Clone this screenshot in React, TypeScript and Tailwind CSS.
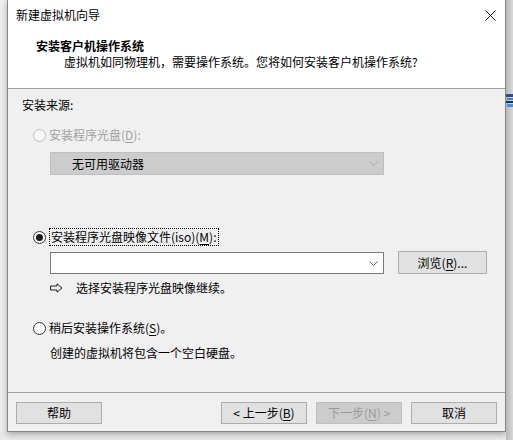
import React from 'react';

const Radio = ({ checked, disabled }: { checked?: boolean; disabled?: boolean }) => (
  <span
    className={`flex h-[13px] w-[13px] shrink-0 items-center justify-center rounded-full border ${
      disabled ? 'border-[#bcbcbc] bg-[#f7f7f7]' : 'border-[#333333] bg-white'
    }`}
  >
    {checked && <span className="h-[7px] w-[7px] rounded-full bg-[#1a1a1a]" />}
  </span>
);

const Chevron = ({ color }: { color: string }) => (
  <svg width="9" height="5" viewBox="0 0 9 5" className="shrink-0">
    <path d="M0.5 0.5 L4.5 4.5 L8.5 0.5" fill="none" stroke={color} strokeWidth="1" />
  </svg>
);

const Btn = ({ children, disabled }: { children: React.ReactNode; disabled?: boolean }) => (
  <div
    className={`flex h-[22px] w-[86px] items-center justify-center border text-[12px] leading-none ${
      disabled ? 'border-[#bfbfbf] bg-[#cccccc] text-[#9a9a9a]' : 'border-[#adadad] bg-[#e1e1e1] text-black'
    }`}
  >
    {children}
  </div>
);

export default function App() {
  return (
    <div className="flex h-[440px] w-[513px] items-start overflow-hidden bg-[#e9e9e9] text-[12px] leading-[16px] text-black [font-family:'Noto_Sans_CJK_SC','Noto_Sans',sans-serif]">
      <div className="h-[432px] w-[7px] shrink-0 bg-[#eeeeee]" />

      {/* dialog window */}
      <div className="flex h-[432px] w-[499px] shrink-0 flex-col border-x border-b border-[#858585] bg-[#f0f0f0] shadow-[0_2px_6px_rgba(0,0,0,0.3)]">
        {/* title bar */}
        <div className="flex h-[30px] shrink-0 items-center justify-between bg-white pl-2 pr-[9px]">
          <span>新建虚拟机向导</span>
          <svg width="11" height="11" viewBox="0 0 11 11">
            <path d="M0.5 0.5 L10.5 10.5 M10.5 0.5 L0.5 10.5" stroke="#111" strokeWidth="1" />
          </svg>
        </div>

        {/* header */}
        <div className="flex h-[59px] shrink-0 flex-col border-b border-[#a0a0a0] bg-white pl-[28px] pt-2">
          <span className="font-bold">安装客户机操作系统</span>
          <span className="ml-[28px]">虚拟机如同物理机，需要操作系统。您将如何安装客户机操作系统?</span>
        </div>

        {/* body */}
        <div className="flex flex-1 flex-col pl-[14px] pt-2">
          <span>安装来源:</span>

          <div className="ml-[11px] mt-[14px] flex items-center gap-[3px] text-[#a0a0a0]">
            <Radio disabled />
            <span>
              安装程序光盘(<u className="underline-offset-2">D</u>):
            </span>
          </div>

          <div className="ml-[28px] mt-[9px] flex h-[23px] w-[334px] items-center justify-between border border-[#bfbfbf] bg-[#cccccc] pl-[21px] pr-[5px]">
            <span>无可用驱动器</span>
            <Chevron color="#a6a6a6" />
          </div>

          <div className="ml-[11px] mt-[53px] flex h-[18px] items-center gap-[3px]">
            <Radio checked />
            <span className="border border-dotted border-black px-px leading-[16px]">
              安装程序光盘映像文件(iso)(<u className="underline-offset-2">M</u>):
            </span>
          </div>

          <div className="ml-[28px] mt-[5px] flex items-start">
            <div className="mt-px flex h-[22px] w-[334px] items-center justify-end border border-[#7a7a7a] bg-white pr-[5px]">
              <Chevron color="#606060" />
            </div>
            <div className="ml-[14px] flex h-[23px] w-[89px] items-center justify-center border border-[#adadad] bg-[#e1e1e1]">
              浏览(<u className="underline-offset-2">R</u>)...
            </div>
          </div>

          <div className="ml-[28px] mt-[6px] flex items-center">
            <svg width="13" height="10" viewBox="0 0 13 10" className="shrink-0">
              <path
                d="M0.5 3 H7 V0.8 L12 5 L7 9.2 V7 H0.5 Z"
                fill="none"
                stroke="#222"
                strokeWidth="1"
                strokeLinejoin="miter"
              />
            </svg>
            <span className="ml-[13px]">选择安装程序光盘映像继续。</span>
          </div>

          <div className="ml-[11px] mt-[24px] flex items-center gap-[3px]">
            <Radio />
            <span>
              稍后安装操作系统(<u className="underline-offset-2">S</u>)。
            </span>
          </div>

          <span className="ml-[28px] mt-[9px]">创建的虚拟机将包含一个空白硬盘。</span>
        </div>

        {/* footer */}
        <div className="flex h-[39px] shrink-0 items-start border-t border-[#a0a0a0] pl-2 pt-[9px]">
          <Btn>帮助</Btn>
          <div className="ml-[119px] flex gap-[9px]">
            <Btn>
              &lt; 上一步(<u className="underline-offset-2">B</u>)
            </Btn>
            <Btn disabled>
              下一步(<u className="underline-offset-2">N</u>) &gt;
            </Btn>
            <Btn>取消</Btn>
          </div>
        </div>
      </div>

      {/* desktop behind, right edge */}
      <div className="flex h-[440px] flex-1 flex-col bg-gradient-to-r from-[#b9b9b9] to-[#d9d9d9] pt-[94px]">
        <svg width="7" height="13" viewBox="0 0 7 13">
          <rect x="0" y="0" width="7" height="3" fill="#2c4f8c" />
          <rect x="1" y="4" width="6" height="2" fill="#3d7fd6" />
          <rect x="0" y="7" width="7" height="2" fill="#1f2f4f" />
          <rect x="1" y="10" width="6" height="3" fill="#4a8ee0" />
        </svg>
      </div>
    </div>
  );
}
